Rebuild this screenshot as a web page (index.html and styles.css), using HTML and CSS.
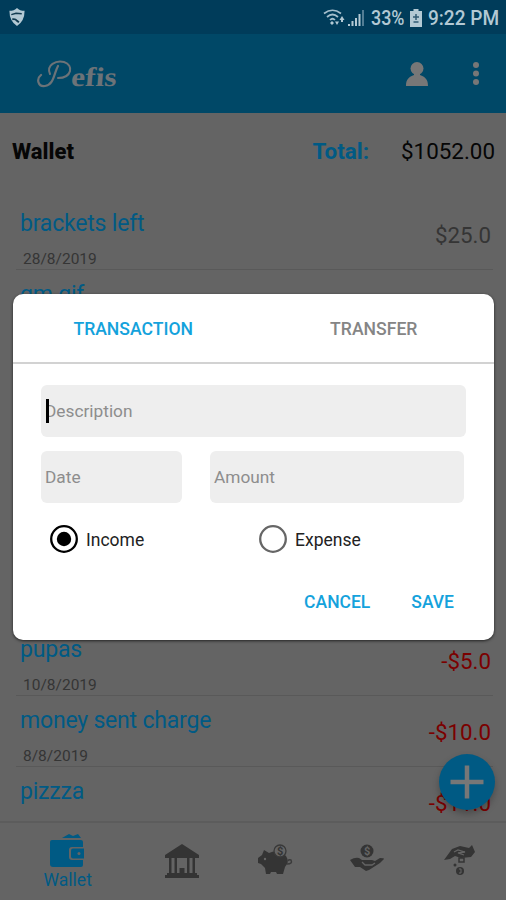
FILE: index.html
```html
<!DOCTYPE html>
<html lang="en">
<head>
<meta charset="utf-8">
<title>Pefis</title>
<link rel="stylesheet" href="styles.css">
</head>
<body>
<div class="app">
  <div class="status">
    <svg class="shield" width="18" height="19" viewBox="0 0 18 20"><path d="M1 3 Q6 3 9 0 Q12 3 17 3 Q17 14 9 19 Q1 14 1 3Z" fill="#b3c9d4"/><path d="M3 7l5-1.500 6 .5" fill="none" stroke="#123b50" stroke-width="1.500"/><path d="M4 12q3-1 5 1.500l2 1.500" fill="none" stroke="#123b50" stroke-width="2"/></svg>
    <div class="status-right">
      <svg class="signal" width="43" height="20" viewBox="0 0 43 20"><g fill="none" stroke="#a5bfcd" stroke-width="1.700"><path d="M1 5.500Q9.500-1 18 5.500"/><path d="M4 9Q9.500 4 15 9"/><path d="M7 12Q9.500 9.500 12 12"/></g><path d="M9 13l2 2-2 2-2-2zM12 13.500h4l-2 3.500zM18 14v-2h-1.500l2.500-4 2.500 4H20v2z" fill="#b3c9d4"/><path d="M25 18v-2h2v2zM28.500 18v-5h2v5zM32 18v-8h2v8zM35.500 18V6h2v12z" fill="#b3c9d4"/><path d="M39 18V2h2v16z" fill="#527d94"/></svg>
      <span class="pct">33%</span>
      <svg class="battery" width="12" height="18" viewBox="0 0 12 18"><path d="M3.500 0h5v2H12v16H0V2h3.500z" fill="#b3c9d4"/><path d="M6 5v6M3 8h6M3.500 13h5" stroke="#315b73" stroke-width="1.500"/></svg>
      <span class="time">9:22 PM</span>
    </div>
  </div>
  <div class="bar">
    <svg class="logo" width="86" height="36" viewBox="0 0 86 36"><path d="M22 7C18 14 18 26 9 27C2 28 0 20 5 16" fill="none" stroke="#6c7378" stroke-width="2.200" stroke-linecap="round"/><path d="M14 15C10 6 20 1 28 3C38 6 36 19 22 19" fill="none" stroke="#6c7378" stroke-width="2" stroke-linecap="round"/><text class="logo-text" transform="translate(34.500 27) skewX(-5)" x="0" y="0" textLength="45.500" lengthAdjust="spacingAndGlyphs">efis</text></svg>
    <svg class="user" width="22" height="24" viewBox="0 0 22 24"><circle cx="11" cy="6.500" r="6.500" fill="#777"/><path d="M8 9h6v4c5 2 8 4 8 11H0c0-7 3-9 8-11z" fill="#777"/></svg>
    <svg class="dots" width="6" height="23" viewBox="0 0 6 23" fill="#777"><circle cx="3" cy="3" r="3"/><circle cx="3" cy="11.500" r="3"/><circle cx="3" cy="20" r="3"/></svg>
  </div>
  <div class="summary"><b class="title">Wallet</b><b class="total">Total:</b><span class="sum">$1052.00</span></div>
  <div class="list">
    <div class="row"><div class="info"><div class="name">brackets left</div><div class="date">28/8/2019</div></div><div class="amt">$25.0</div></div>
    <div class="row"><div class="info"><div class="name">gm gif</div></div></div>
    <div class="spacer"></div>
    <div class="row"><div class="info"><div class="name">pupas</div><div class="date">10/8/2019</div></div><div class="amt neg">-$5.0</div></div>
    <div class="row"><div class="info"><div class="name">money sent charge</div><div class="date">8/8/2019</div></div><div class="amt neg">-$10.0</div></div>
    <div class="row"><div class="info"><div class="name">pizzza</div></div><div class="amt neg">-$11.0</div></div>
  </div>
  <div class="nav">
    <div class="tab active">
      <svg width="35" height="35" viewBox="0 0 35 35"><path d="M12 5l7-4 4 2 5-2 3 4z" fill="#005a84"/><path d="M2 7h29q2 0 2 2v5H22q-3 0-3 3v7q0 3 3 3h11v5q0 2-2 2H3q-3 0-3-3V9q0-2 2-2z" fill="#005a84"/><path d="M34 15.500H23q-2 0-2 2v6q0 2 2 2h11z" fill="#005a84"/><circle cx="29" cy="20.500" r="1.500" fill="#646464"/></svg>
      <span>Wallet</span>
    </div>
    <div class="tab"><svg width="34" height="35" viewBox="0 0 34 35" fill="#343434"><path d="M17 0l17 11v3H0v-3zM4 14h2.500v15H4zM9.500 14H12v15H9.500zM22 14h2.500v15H22zM27.500 14H30v15h-2.500zM14.500 24h5v5h-5zM2 29h30v2H2zM0 31h34v3H0z"/></svg></div>
    <div class="tab piggy"><svg width="35" height="31" viewBox="0 0 35 31"><path d="M6 6l5 3q10-4 17 3 4 6-1 11l-2 7h-6l-1-2h-5l-1 2H8l-1-6-4-4-3-1v-5l4-3z" fill="#343434"/><path d="M29 20q6 0 4-4-2-1-3 1" fill="none" stroke="#3b3b3b" stroke-width="1.500"/><circle cx="22" cy="7" r="6" fill="#646464" stroke="#393939" stroke-width="1.300"/><text class="coin light" x="19" y="11">$</text><circle cx="7" cy="15" r="1.200" fill="#666"/></svg></div>
    <div class="tab"><svg width="34" height="28" viewBox="0 0 34 28"><circle cx="17" cy="7" r="6.500" fill="#343434"/><text class="coin dark" x="14" y="11">$</text><path d="M0 16q5-3 9-2l3 2h10l3 1 5-3q4 0 4 1l-4 4-11 7-3 1-6-4H5z" fill="#343434"/><path d="M12 18l3 3h7l3-2" fill="none" stroke="#646464" stroke-width="1.300"/></svg></div>
    <div class="tab"><svg width="32" height="32" viewBox="0 0 32 32"><path d="M0 16l8-11 8-3 9 2 3-3 3 7-4 5-10 1-6-2-5 3z" fill="#343434"/><path d="M10 8l4-2 7 2-7 1 6 2" fill="none" stroke="#646464" stroke-width="1.300"/><path d="M15 14h5v4h-5z" fill="#646464" stroke="#343434" stroke-width="1.500"/><circle cx="11" cy="21" r="1.500" fill="#343434"/><circle cx="16" cy="27" r="4" fill="#343434"/><path d="M15 25h2v4h-2" fill="none" stroke="#646464"/></svg></div>
  </div>
  <div class="fab"><svg width="56" height="56" viewBox="0 0 56 56"><path d="M28 11.500v33M11.500 28h33" stroke="#777" stroke-width="4.500"/></svg></div>
  <div class="dialog">
    <div class="tabs"><span class="on">TRANSACTION</span><span>TRANSFER</span></div>
    <div class="form">
      <div class="field desc"><i class="caret"></i>Description</div>
      <div class="pair"><div class="field day">Date</div><div class="field amount">Amount</div></div>
      <div class="radios">
        <label class="income"><svg width="28" height="28" viewBox="0 0 28 28"><circle cx="14" cy="14" r="12.800" fill="none" stroke="#000" stroke-width="2.300"/><circle cx="14" cy="14" r="7.200"/></svg>Income</label>
        <label><svg width="28" height="28" viewBox="0 0 28 28"><circle cx="14" cy="14" r="12.800" fill="none" stroke="#666" stroke-width="2.300"/></svg>Expense</label>
      </div>
      <div class="actions"><span>CANCEL</span><span>SAVE</span></div>
    </div>
  </div>
</div>
</body>
</html>
```
FILE: styles.css
```css
* { box-sizing: border-box; }
body { margin: 0; font-family: Roboto, "Liberation Sans", sans-serif; }
.app { position: relative; width: 506px; height: 900px; overflow: hidden; background: #646464; display: flex; flex-direction: column; }
.status { height: 34px; flex: none; background: #003c5a; display: flex; justify-content: space-between; padding: 8px 9px 0 8px; }
.status-right { display: flex; align-items: flex-start; color: #b3c9d4; font-size: 20.500px; font-weight: 500; line-height: 26px; }
.signal { flex: none; }
.pct, .time { display: block; white-space: nowrap; height: 26px; margin-top: -3px; transform-origin: left center; }
.pct { width: 34px; margin-left: 5px; transform: scaleX(.87); }
.time { width: 69px; transform: scaleX(.93); }
.battery { flex: none; margin: 1px 6px 0 5px; }
.bar { height: 79px; flex: none; background: #004867; display: flex; align-items: flex-start; padding: 25px 27px 0 36px; }
.logo-text { font: 600 27px "Liberation Serif", serif; fill: #6c7378; }
.user { margin: 3px 0 0 284px; }
.dots { margin: 3px 0 0 auto; }
.summary { height: 78px; flex: none; display: flex; padding: 24px 11px 0 12px; font-size: 22.400px; line-height: 28px; color: #060606; }
.title { font-weight: 800; padding-top: 1px; font-size: 22px; }
.total { color: #005a84; margin-left: auto; }
.sum { margin-left: 32px; }
.list { flex: 1; overflow: hidden; margin: 0 13px 0 16px; padding-top: 8px; }
.row { height: 71px; display: flex; justify-content: space-between; border-bottom: 1px solid #595959; }
.info { padding: 11px 0 0 4px; }
.name { font-size: 23px; line-height: 28px; letter-spacing: -.2px; color: #005a84; }
.date { font-size: 15.500px; line-height: 20px; margin: 11px 0 0 3px; color: #353535; }
.amt { font-size: 22.300px; line-height: 28px; padding: 22px 2px 0 0; color: #353535; }
.amt.neg { color: #7b0000; }
.spacer { height: 284px; }
.nav { height: 79px; flex: none; border-top: 2px solid #5c5c5c; display: flex; padding: 0; }
.tab { width: 93px; display: flex; flex-direction: column; align-items: center; padding-top: 21px; }
.tab:first-child { width: 136px; padding-top: 10px; color: #005a84; font-size: 17.500px; line-height: 25px; }
.piggy { padding-left: 3px; }
.coin { font: bold 11px Roboto, sans-serif; }
.light { fill: #343434; }
.dark { fill: #646464; }
.fab { position: absolute; left: 439px; top: 754px; width: 56px; height: 56px; border-radius: 50%; background: #005a84; box-shadow: 0 4px 7px rgba(0,0,0,.25); }
.dialog { position: absolute; left: 13px; top: 294px; width: 481px; height: 346px; border-radius: 10px; background: #fff; box-shadow: 0 1px 3px #222; }
.tabs { height: 70px; border-bottom: 2px solid #d2d2d2; display: flex; align-items: center; font-size: 17.600px; font-weight: 500; color: #858585; }
.tabs span { width: 50%; text-align: center; padding-top: 1px; }
.tabs .on { color: #14a2dc; }
.form { padding: 21px 28px 0; }
.field { height: 52px; border-radius: 6px; background: #eee; color: #8d8d8d; font-size: 17.300px; line-height: 53px; padding-left: 4px; }
.desc { position: relative; width: 425px; }
.caret { position: absolute; left: 5px; top: 14px; width: 3px; height: 24px; background: #000; }
.pair { display: flex; gap: 28px; margin-top: 14px; }
.day { width: 141px; }
.amount { width: 254px; }
.radios { display: flex; margin: 22px 0 0 9px; color: #222; font-size: 17.500px; line-height: 30px; }
.radios label { display: flex; gap: 8px; height: 29px; }
.radios .income { width: 209px; }
.actions { display: flex; justify-content: flex-end; gap: 41px; margin: 36px 12px 0 0; color: #14a2dc; font-size: 17.500px; font-weight: 500; line-height: 24px; }
```
